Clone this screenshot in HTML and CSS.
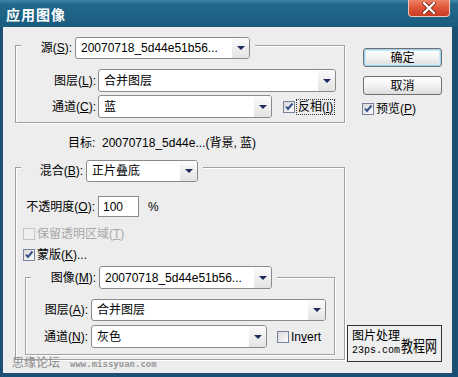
FILE: index.html
```html
<!DOCTYPE html>
<html lang="zh-CN">
<head>
    <meta charset="UTF-8">
    <title>应用图像</title>
    <link rel="stylesheet" href="styles.css">
</head>
<body>
    <div class="window">
        <div class="titlebar">
            <span class="title">应用图像</span>
            <div class="close-btn">
                <svg width="14" height="12" viewBox="0 0 14 12">
                    <path d="M2 1 L12 11 M12 1 L2 11" stroke="#7a2a1a" stroke-width="4" stroke-linecap="round"/>
                    <path d="M2 1 L12 11 M12 1 L2 11" stroke="#fff" stroke-width="2.4" stroke-linecap="round"/>
                </svg>
            </div>
        </div>

        <div class="dialog">
            <div class="main">
                <!-- source -->
                <div class="group group-source">
                    <div class="group-head head-source">
                        <label class="lbl">源(<u>S</u>):</label>
                        <div class="combo combo-source">
                            <span class="val">20070718_5d44e51b56...</span>
                            <span class="drop"></span>
                        </div>
                    </div>
                    <div class="row row-first">
                        <label class="lbl lbl-src">图层(<u>L</u>):</label>
                        <div class="combo combo-layer">
                            <span class="val">合并图层</span>
                            <span class="drop"></span>
                        </div>
                    </div>
                    <div class="row row-next">
                        <label class="lbl lbl-src">通道(<u>C</u>):</label>
                        <div class="combo combo-channel">
                            <span class="val">蓝</span>
                            <span class="drop"></span>
                        </div>
                        <span class="check checked invert-check">
                            <svg width="10" height="10" viewBox="0 0 10 10"><path d="M2 4.5 L4 7 L8.5 1.5" fill="none" stroke="#34508a" stroke-width="2"/></svg>
                        </span>
                        <span class="focus-text">反相(<u>I</u>)</span>
                    </div>
                </div>

                <div class="target">目标:&nbsp; 20070718_5d44e...(背景, 蓝)</div>

                <!-- blending -->
                <div class="group group-blend">
                    <div class="group-head head-blend">
                        <label class="lbl">混合(<u>B</u>):</label>
                        <div class="combo combo-blend">
                            <span class="val">正片叠底</span>
                            <span class="drop"></span>
                        </div>
                    </div>
                    <div class="row row-opacity">
                        <label class="lbl lbl-opacity">不透明度(<u>O</u>):</label>
                        <div class="field">100</div>
                        <span class="percent">%</span>
                    </div>
                    <div class="row row-check row-preserve">
                        <span class="check disabled"></span>
                        <span class="check-text muted">保留透明区域(<u>T</u>)</span>
                    </div>
                    <div class="row row-check row-mask">
                        <span class="check checked">
                            <svg width="10" height="10" viewBox="0 0 10 10"><path d="M2 4.5 L4 7 L8.5 1.5" fill="none" stroke="#34508a" stroke-width="2"/></svg>
                        </span>
                        <span class="check-text">蒙版(<u>K</u>)...</span>
                    </div>

                    <div class="group group-mask">
                        <div class="group-head head-mask">
                            <label class="lbl">图像(<u>M</u>):</label>
                            <div class="combo combo-image">
                                <span class="val">20070718_5d44e51b56...</span>
                                <span class="drop"></span>
                            </div>
                        </div>
                        <div class="row row-first">
                            <label class="lbl lbl-mask">图层(<u>A</u>):</label>
                            <div class="combo combo-mlayer">
                                <span class="val">合并图层</span>
                                <span class="drop"></span>
                            </div>
                        </div>
                        <div class="row row-mchannel">
                            <label class="lbl lbl-mask">通道(<u>N</u>):</label>
                            <div class="combo combo-mchannel">
                                <span class="val">灰色</span>
                                <span class="drop"></span>
                            </div>
                            <span class="check mask-invert"></span>
                            <span class="check-text">In<u>v</u>ert</span>
                        </div>
                    </div>
                </div>
            </div>

            <div class="side">
                <button class="btn default">确定</button>
                <button class="btn cancel">取消</button>
                <div class="row row-preview">
                    <span class="check checked">
                        <svg width="10" height="10" viewBox="0 0 10 10"><path d="M2 4.5 L4 7 L8.5 1.5" fill="none" stroke="#34508a" stroke-width="2"/></svg>
                    </span>
                    <span class="check-text">预览(<u>P</u>)</span>
                </div>
            </div>

            <!-- watermarks on top of the screenshot -->
            <div class="mark-left">
                <span class="mark-cn">思缘论坛</span>
                <span class="mark-url">www.missyuan.com</span>
            </div>
            <div class="mark-box">
                <div class="mark-col">
                    <span class="mark-top">图片处理</span>
                    <span class="mark-site">23ps.com</span>
                </div>
                <span class="mark-big">教程网</span>
            </div>
        </div>
    </div>
</body>
</html>
```

FILE: styles.css
```css
* {
    box-sizing: border-box;
    margin: 0;
    padding: 0;
}

body {
    width: 458px;
    height: 377px;
    overflow: hidden;
    background: #ededed;
    color: #000;
    font-family: "Liberation Sans", "Noto Sans CJK SC", sans-serif;
    font-size: 12px;
    line-height: 14px;
}

u {
    text-decoration: underline;
    text-underline-offset: 1px;
}

.window {
    display: flex;
    flex-direction: column;
    width: 458px;
    height: 377px;
}

/* title bar */
.titlebar {
    height: 27px;
    display: flex;
    justify-content: space-between;
    align-items: flex-start;
    background: linear-gradient(#3f88aa 0, #24698b 4px, #1d6386 55%, #195b7d 100%);
}

.title {
    margin: 7px 0 0 6px;
    color: #fff;
    font-size: 14px;
    line-height: 16px;
    font-weight: bold;
    letter-spacing: 1px;
}

.close-btn {
    width: 42px;
    height: 17px;
    margin-right: 8px;
    display: flex;
    align-items: center;
    justify-content: center;
    border: 1px solid #f0c8b8;
    border-top: none;
    border-radius: 0 0 4px 4px;
    background: linear-gradient(#ee8466, #e2573c 45%, #c93c22);
}

/* dialog body */
.dialog {
    flex: 1;
    display: flex;
    position: relative;
    border: 0 solid #1b5074;
    border-width: 0 6px 4px 3px;
    background: #ededed;
}

.main {
    width: 330px;
    margin-left: 12px;
}

.group {
    border: 1px solid #a0a0a0;
    box-shadow: inset 1px 1px 0 #fff, 1px 1px 0 #fff;
}

.group-head {
    display: flex;
    align-items: center;
    gap: 3px;
    width: fit-content;
    margin-left: 5px;
    padding-right: 5px;
    background: #ededed;
}

.row {
    display: flex;
    align-items: center;
}

.lbl {
    flex-shrink: 0;
    text-align: right;
    white-space: nowrap;
}

/* combo boxes */
.combo {
    display: flex;
    height: 23px;
    border: 1px solid #8a8a8a;
    border-radius: 3px;
    background: #fff;
}

.combo .val {
    flex: 1;
    display: flex;
    align-items: center;
    padding-left: 5px;
    white-space: nowrap;
    overflow: hidden;
}

.combo .drop {
    width: 17px;
    display: flex;
    align-items: center;
    justify-content: center;
    border-radius: 0 2px 2px 0;
    background: linear-gradient(#fbfbfb, #e3e3e3);
}

.combo .drop::after {
    content: "";
    border-left: 4px solid transparent;
    border-right: 4px solid transparent;
    border-top: 4px solid #1d2a5e;
}

/* check boxes */
.check {
    width: 12px;
    height: 12px;
    flex-shrink: 0;
    display: inline-flex;
    align-items: center;
    justify-content: center;
    border: 1px solid #76829a;
    background: linear-gradient(135deg, #d9d9d9, #fbfbfb);
}

.check.disabled {
    border-color: #c4c4c4;
    background: #efefef;
}

.check-text {
    margin-left: 2px;
    white-space: nowrap;
}

.muted {
    color: #a8a8a8;
}

/* source group */
.group-source {
    margin-top: 18px;
    padding-bottom: 4px;
}

.head-source {
    margin-top: -9px;
    height: 22px;
}

.head-source .lbl { width: 51px; }
.combo-source { width: 175px; height: 22px; }

.row-first { margin-top: 10px; }
.row-next { margin-top: 3px; }

.lbl-src {
    width: 80px;
    margin-right: 2px;
}

.combo-layer { width: 238px; }
.combo-channel { width: 174px; }

.invert-check { margin-left: 11px; }

.focus-text {
    margin-left: 2px;
    padding: 0 1px;
    outline: 1px dotted #333;
    outline-offset: 0;
}

.target {
    margin-top: 13px;
    padding-left: 53px;
    white-space: nowrap;
}

/* blending group */
.group-blend {
    margin-top: 17px;
    padding-bottom: 4px;
}

.head-blend {
    margin-top: -8px;
    height: 22px;
}

.head-blend .lbl { width: 62px; }
.combo-blend { width: 112px; height: 22px; }

.row-opacity { margin-top: 14px; }

.lbl-opacity {
    width: 79px;
    margin-right: 3px;
}

.field {
    width: 41px;
    height: 21px;
    display: flex;
    align-items: center;
    padding-left: 4px;
    border: 1px solid #8a8a8a;
    background: #fff;
}

.percent { margin-left: 9px; }

.row-check { padding-left: 7px; }
.row-preserve { margin-top: 10px; }
.row-mask { margin-top: 7px; }

/* mask group */
.group-mask {
    margin: 15px 9px 0;
    padding-bottom: 6px;
}

.head-mask {
    margin-top: -12px;
    height: 23px;
}

.head-mask .lbl { width: 65px; }
.combo-image { width: 173px; }

.lbl-mask {
    width: 62px;
    margin-right: 3px;
}

.combo-mlayer { width: 235px; height: 22px; }
.row-mchannel { margin-top: 4px; }
.combo-mchannel { width: 176px; }
.mask-invert { margin-left: 10px; }

/* buttons */
.side {
    display: flex;
    flex-direction: column;
    margin-left: 18px;
    padding-top: 21px;
}

.btn {
    width: 79px;
    height: 19px;
    border: 1px solid #707070;
    border-radius: 3px;
    background: linear-gradient(#ffffff, #f3f3f3 50%, #dcdcdc);
    font: inherit;
    color: #000;
}

.btn.default {
    box-shadow: inset 0 0 0 1px #9fd2ee, inset 0 0 0 2px #cfeaf8;
}

.btn.cancel { margin-top: 9px; }

.row-preview {
    margin-top: 7px;
    margin-left: -1px;
}

/* watermarks */
.mark-left {
    position: absolute;
    left: 9px;
    top: 329px;
    display: flex;
    align-items: baseline;
    gap: 10px;
    white-space: nowrap;
}

.mark-cn {
    color: #8c8c8c;
    font-size: 12px;
}

.mark-url {
    color: #9a9a9a;
    font-family: "DejaVu Sans Mono", monospace;
    font-size: 9px;
    font-weight: bold;
}

.mark-box {
    position: absolute;
    left: 344px;
    top: 298px;
    width: 95px;
    height: 37px;
    display: flex;
    align-items: flex-end;
    padding: 3px 1px 5px 4px;
    border: 1px solid #333;
    background: #efefef;
    white-space: nowrap;
}

.mark-col {
    display: flex;
    flex-direction: column;
    gap: 2px;
}

.mark-top {
    font-size: 12px;
    line-height: 13px;
}

.mark-site {
    font-family: "Liberation Mono", monospace;
    font-size: 10px;
    line-height: 11px;
}

.mark-big {
    margin-left: 1px;
    font-size: 12px;
    line-height: 14px;
    transform: scaleY(1.35);
    transform-origin: bottom;
}
```
